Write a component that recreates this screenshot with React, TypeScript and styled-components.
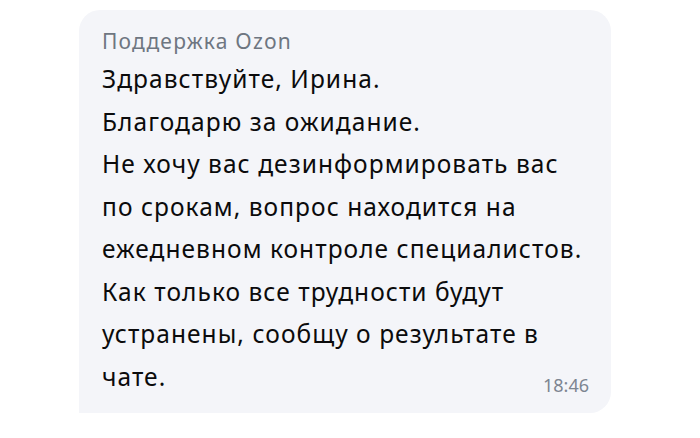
import React from "react";
import styled, { createGlobalStyle } from "styled-components";

const Global = createGlobalStyle`
  html, body { margin: 0; padding: 0; background: #ffffff; }
  body { font-family: "Noto Sans", "Open Sans", sans-serif; }
`;

const Page = styled.div`
  width: 700px;
  height: 438px;
  padding: 10px 0 0 79px;
  box-sizing: border-box;
`;

const Bubble = styled.div`
  width: 532px;
  height: 403px;
  box-sizing: border-box;
  background: #f4f5f9;
  border-radius: 21px 21px 21px 0;
  padding: 19px 22px 0 23px;
  display: flex;
  flex-direction: column;
`;

const Sender = styled.div`
  font-size: 21px;
  line-height: 24px;
  letter-spacing: 1.2px;
  color: #6e7681;
  margin-bottom: 5px;
`;

const Body = styled.div`
  font-size: 24.5px;
  line-height: 42.5px;
  letter-spacing: 1.05px;
  color: #0b0b0c;
`;

const Line = styled.div`
  white-space: nowrap;
  display: flex;
  justify-content: space-between;
`;

const Time = styled.span`
  align-self: flex-end;
  font-size: 18px;
  line-height: 18px;
  letter-spacing: 0;
  color: #7d8591;
  margin-bottom: 4px;
`;

const lines = [
  "Здравствуйте, Ирина.",
  "Благодарю за ожидание.",
  "Не хочу вас дезинформировать вас",
  "по срокам, вопрос находится на",
  "ежедневном контроле специалистов.",
  "Как только все трудности будут",
  "устранены, сообщу о результате в",
];

export default function App() {
  return (
    <Page>
      <Global />
      <Bubble>
        <Sender>Поддержка Ozon</Sender>
        <Body>
          {lines.map((l) => (
            <Line key={l}>{l}</Line>
          ))}
          <Line>
            <span>чате.</span>
            <Time>18:46</Time>
          </Line>
        </Body>
      </Bubble>
    </Page>
  );
}
